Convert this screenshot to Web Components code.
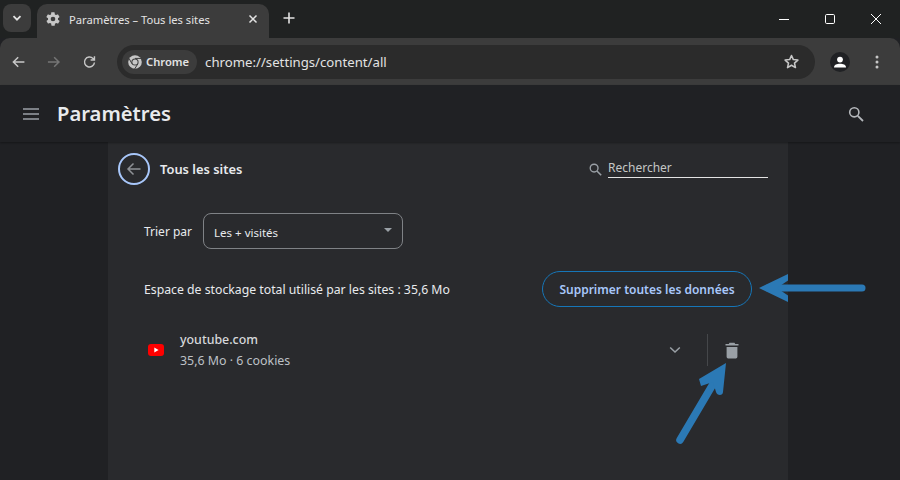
<!DOCTYPE html>
<html lang="fr">
<head>
<meta charset="utf-8">
<title>Paramètres – Tous les sites</title>
<style>
  html, body { margin: 0; height: 100%; background: #202124; overflow: hidden; }
  body { font-family: "Noto Sans", "Open Sans", sans-serif; color: #e8eaed; width: 900px; height: 480px; position: relative; }
  .arrows { position: absolute; left: 0; top: 0; width: 900px; height: 480px; pointer-events: none; }
</style>
</head>
<body>
<browser-tabs></browser-tabs>
<browser-toolbar></browser-toolbar>
<settings-header></settings-header>
<site-page>
  <sort-row></sort-row>
  <storage-row></storage-row>
  <site-entry></site-entry>
</site-page>
<svg class="arrows" viewBox="0 0 900 480">
  <defs><clipPath id="c1"><rect x="0" y="0" width="788" height="480"/></clipPath></defs>
  <path d="M862 288H768" stroke="#2b79b5" stroke-width="7" stroke-linecap="round" fill="none"/>
  <path d="M790 273L759 288L790 303L790 297L777 288L790 279Z" fill="#2b79b5" clip-path="url(#c1)"/>
  <path d="M680 440L719 374" stroke="#2b79b5" stroke-width="7.5" stroke-linecap="round" fill="none"/>
  <path d="M726 363L699 379L701 386L713 382L716 392C717 396 723 396 723 392Z" fill="#2b79b5"/>
</svg>
<script>
class BrowserTabs extends HTMLElement {
  constructor() {
    super();
    this.attachShadow({ mode: "open" });
    this.shadowRoot.innerHTML = `
      <style>
        :host { display: flex; height: 38px; background: #202222; box-sizing: border-box; padding: 4px 0 0 3px; font-family: "Noto Sans", sans-serif; align-items: flex-start; }
        .menu { width: 28px; height: 28px; background: #3c3c3c; border-radius: 8px; display: flex; align-items: center; justify-content: center; margin-right: 6px; }
        .tab { width: 232px; height: 34px; background: #3c3c3c; border-radius: 10px 10px 0 0; display: flex; align-items: center; box-sizing: border-box; padding: 0 8px 4px 8px; font-size: 11.2px; color: #e3e3e3; position: relative; }
        .tab span { margin-left: 8px; flex: 1; white-space: nowrap; }
        .plus { margin: 6px 0 0 12px; width: 16px; height: 16px; }
        .spacer { flex: 1; }
        .win { display: flex; width: 139px; margin-top: 1px; }
        .win div { width: 46px; height: 28px; display: flex; align-items: center; justify-content: center; }
      </style>
      <div class="menu"><svg width="12" height="12" viewBox="0 0 12 12"><path d="M2.5 4.2L6 7.7L9.5 4.2" fill="none" stroke="#e3e3e3" stroke-width="1.8"/></svg></div>
      <div class="tab">
        <svg width="16" height="16" viewBox="0 0 24 24"><path fill="#c7c7c7" d="M19.4 13c.1-.3.1-.7.1-1s0-.7-.1-1l2.1-1.6c.2-.2.2-.4.1-.6l-2-3.5c-.1-.2-.4-.3-.6-.2l-2.5 1c-.5-.4-1.1-.7-1.7-1l-.4-2.6c0-.3-.2-.5-.5-.5h-4c-.3 0-.5.2-.5.4l-.4 2.7c-.6.2-1.1.6-1.7 1l-2.5-1c-.2-.1-.5 0-.6.2l-2 3.5c-.1.2 0 .4.1.6L4.6 11c0 .3-.1.7-.1 1s0 .7.1 1l-2.1 1.6c-.2.2-.2.4-.1.6l2 3.5c.1.2.4.3.6.2l2.5-1c.5.4 1.1.7 1.7 1l.4 2.6c0 .3.2.5.5.5h4c.3 0 .5-.2.5-.4l.4-2.7c.6-.2 1.1-.6 1.7-1l2.5 1c.2.1.5 0 .6-.2l2-3.5c.1-.2 0-.4-.1-.6L19.4 13zM12 15.5a3.5 3.5 0 1 1 0-7 3.5 3.5 0 0 1 0 7z"/></svg>
        <span>Paramètres – Tous les sites</span>
        <svg width="10" height="10" viewBox="0 0 10 10" style="margin:0 3px 0 0"><path d="M1.5 1.5L8.5 8.5M8.5 1.5L1.5 8.5" stroke="#e3e3e3" stroke-width="1.5"/></svg>
      </div>
      <svg class="plus" viewBox="0 0 16 16"><path d="M8 2.5V13.5M2.5 8H13.5" stroke="#e3e3e3" stroke-width="1.6"/></svg>
      <div class="spacer"></div>
      <div class="win">
        <div><svg width="12" height="12" viewBox="0 0 12 12"><path d="M1 6.5H11" stroke="#fff" stroke-width="1"/></svg></div>
        <div><svg width="12" height="12" viewBox="0 0 12 12"><rect x="1.5" y="1.5" width="9" height="9" rx="1.2" fill="none" stroke="#fff" stroke-width="1"/></svg></div>
        <div><svg width="12" height="12" viewBox="0 0 12 12"><path d="M1 1L11 11M11 1L1 11" stroke="#fff" stroke-width="1"/></svg></div>
      </div>`;
  }
}
customElements.define("browser-tabs", BrowserTabs);

class BrowserToolbar extends HTMLElement {
  constructor() {
    super();
    this.attachShadow({ mode: "open" });
    this.shadowRoot.innerHTML = `
      <style>
        :host { display: flex; align-items: center; height: 47px; background: #3c3c3c; border-radius: 10px 10px 0 0; box-sizing: border-box; padding: 0 6px 0 11px; font-family: "Noto Sans", sans-serif; }
        .nav { display: flex; width: 106px; }
        .nav svg { margin-right: 20px; }
        .omni { width: 698px; height: 34px; background: #2b2b2b; border-radius: 17px; display: flex; align-items: center; box-sizing: border-box; padding: 0 15px 0 5px; }
        .chip { display: flex; align-items: center; background: #3c3c3c; border-radius: 12px; height: 24px; padding: 0 8px 0 5px; font-size: 11.2px; font-weight: 600; color: #e3e3e3; gap: 3px; }
        .url { margin-left: 8px; font-size: 13.2px; color: #e3e3e3; flex: 1; white-space: nowrap; }
        .right { display: flex; align-items: center; margin-left: 15px; gap: 19px; }
      </style>
      <div class="nav">
        <svg width="16" height="16" viewBox="0 0 16 16"><path d="M14 8H2.5M7.5 3L2.5 8L7.5 13" fill="none" stroke="#c7c7c7" stroke-width="1.6"/></svg>
        <svg width="16" height="16" viewBox="0 0 16 16"><path d="M2 8H13.5M8.5 3L13.5 8L8.5 13" fill="none" stroke="#757575" stroke-width="1.6"/></svg>
        <svg width="16" height="16" viewBox="0 0 16 16"><path d="M13 8.5A5.2 5.2 0 1 1 11.5 4.3L13 5.8M13 2V6H9" fill="none" stroke="#c7c7c7" stroke-width="1.5"/></svg>
      </div>
      <div class="omni">
        <div class="chip">
          <svg width="16" height="16" viewBox="0 0 16 16"><circle cx="8" cy="8" r="6.8" fill="#c7c7c7"/><circle cx="8" cy="8" r="3.6" fill="#3c3c3c"/><circle cx="8" cy="8" r="2.6" fill="#c7c7c7"/><path d="M8 4.4H14.2M5 9.8L2 4.4M10.9 9.8L7.6 15" stroke="#3c3c3c" stroke-width="1" fill="none"/></svg>
          <span>Chrome</span>
        </div>
        <div class="url">chrome://settings/content/all</div>
        <svg width="17" height="17" viewBox="0 0 24 24"><path d="M12 3.5L14.6 9.3L21 10L16.2 14.3L17.6 20.6L12 17.3L6.4 20.6L7.8 14.3L3 10L9.4 9.3Z" fill="none" stroke="#c7c7c7" stroke-width="2.2" stroke-linejoin="round"/></svg>
      </div>
      <div class="right">
        <svg width="20" height="20" viewBox="0 0 20 20"><circle cx="10" cy="10" r="10" fill="#202124"/><circle cx="10" cy="7.6" r="2.9" fill="#fff"/><path d="M4 15.5C4 12.8 7 11.8 10 11.8S16 12.8 16 15.5Z" fill="#fff"/></svg>
        <svg width="16" height="16" viewBox="0 0 16 16"><circle cx="8" cy="3" r="1.5" fill="#c7c7c7"/><circle cx="8" cy="8" r="1.5" fill="#c7c7c7"/><circle cx="8" cy="13" r="1.5" fill="#c7c7c7"/></svg>
      </div>`;
  }
}
customElements.define("browser-toolbar", BrowserToolbar);

class SettingsHeader extends HTMLElement {
  constructor() {
    super();
    this.attachShadow({ mode: "open" });
    this.shadowRoot.innerHTML = `
      <style>
        :host { display: flex; align-items: center; height: 57px; background: #202124; box-sizing: border-box; padding: 0 36px 0 23px; font-family: "Noto Sans", sans-serif; box-shadow: 0 1px 2px rgba(0,0,0,.35); position: relative; }
        h1 { margin: 0 0 0 18px; font-size: 20.2px; font-weight: 600; color: #e8eaed; flex: 1; line-height: 57px; }
      </style>
      <svg width="16" height="12" viewBox="0 0 16 12"><path d="M0 1H16M0 6H16M0 11H16" stroke="#9aa0a6" stroke-width="1.6"/></svg>
      <h1>Paramètres</h1>
      <svg width="16" height="16" viewBox="0 0 16 16"><circle cx="6.3" cy="6.3" r="4.6" fill="none" stroke="#b4b7bb" stroke-width="1.6"/><path d="M9.8 9.8L15 15" stroke="#b4b7bb" stroke-width="1.8"/></svg>`;
  }
}
customElements.define("settings-header", SettingsHeader);

class SitePage extends HTMLElement {
  constructor() {
    super();
    this.attachShadow({ mode: "open" });
    this.shadowRoot.innerHTML = `
      <style>
        :host { display: block; width: 680px; height: 338px; margin-left: 108px; background: #292a2d; font-family: "Noto Sans", sans-serif; box-sizing: border-box; padding-top: 10px; }
        .head { display: flex; align-items: center; height: 34px; padding: 0 20px 0 10px; }
        .back { width: 32px; height: 32px; box-sizing: border-box; border: 2px solid #a8c7fa; border-radius: 50%; display: flex; align-items: center; justify-content: center; }
        .title { margin-left: 10px; font-size: 12.9px; font-weight: 600; color: #e8eaed; flex: 1; }
        .search { display: flex; align-items: center; gap: 6px; }
        .field { width: 160px; font-size: 12px; color: #c4c7c5; border-bottom: 1px solid #e3e3e3; line-height: 16px; height: 17px; }
      </style>
      <div class="head">
        <div class="back"><svg width="16" height="16" viewBox="0 0 16 16"><path d="M14.5 8H2M7.5 2.5L2 8L7.5 13.5" fill="none" stroke="#8f9296" stroke-width="1.5"/></svg></div>
        <div class="title">Tous les sites</div>
        <div class="search">
          <svg width="13" height="13" viewBox="0 0 16 16"><circle cx="6.3" cy="6.3" r="4.8" fill="none" stroke="#9aa0a6" stroke-width="1.7"/><path d="M9.8 9.8L15 15" stroke="#9aa0a6" stroke-width="1.9"/></svg>
          <div class="field">Rechercher</div>
        </div>
      </div>
      <slot></slot>`;
  }
}
customElements.define("site-page", SitePage);

class SortRow extends HTMLElement {
  constructor() {
    super();
    this.attachShadow({ mode: "open" });
    this.shadowRoot.innerHTML = `
      <style>
        :host { display: flex; align-items: center; margin-top: 27px; padding-left: 36px; font-size: 12px; color: #e8eaed; }
        .select { margin-left: 11px; width: 200px; height: 36px; box-sizing: border-box; border: 1px solid #7f8286; border-radius: 8px; display: flex; align-items: center; justify-content: space-between; padding: 0 10px; font-size: 11.5px; }
        .caret { width: 0; height: 0; border-left: 4px solid transparent; border-right: 4px solid transparent; border-top: 4px solid #9aa0a6; margin-top: -3px; }
        .select span { margin-top: 2px; }
      </style>
      <span>Trier par</span>
      <div class="select"><span>Les + visités</span><div class="caret"></div></div>`;
  }
}
customElements.define("sort-row", SortRow);

class StorageRow extends HTMLElement {
  constructor() {
    super();
    this.attachShadow({ mode: "open" });
    this.shadowRoot.innerHTML = `
      <style>
        :host { display: flex; align-items: center; justify-content: space-between; margin-top: 22px; padding: 0 36px; font-size: 12.25px; color: #e8eaed; }
        button { width: 210px; height: 36px; border-radius: 18px; border: 1px solid #1676b8; background: transparent; color: #a8c7fa; font: 600 12px "Noto Sans", sans-serif; padding: 0; }
      </style>
      <span>Espace de stockage total utilisé par les sites : 35,6 Mo</span>
      <button>Supprimer toutes les données</button>`;
  }
}
customElements.define("storage-row", StorageRow);

class SiteEntry extends HTMLElement {
  constructor() {
    super();
    this.attachShadow({ mode: "open" });
    this.shadowRoot.innerHTML = `
      <style>
        :host { display: flex; align-items: center; margin-top: 17px; padding: 0 49px 0 40px; height: 52px; font-size: 12.4px; color: #bdc1c6; }
        .icon { width: 16px; height: 12px; margin-right: 16px; margin-top: -1px; }
        .text { flex: 1; line-height: 21px; }
        .name { color: #d6d8db; font-weight: 500; }
        .sep { width: 1px; height: 32px; background: #45474a; margin: 0 17px 0 26px; }
      </style>
      <svg class="icon" viewBox="0 0 16 12"><rect width="16" height="12" rx="3" fill="#ff0000"/><path d="M6.3 3.6L10.6 6L6.3 8.4Z" fill="#fff"/></svg>
      <div class="text"><div class="name">youtube.com</div><div>35,6 Mo · 6 cookies</div></div>
      <svg width="12" height="8" viewBox="0 0 12 8"><path d="M1.2 1.5L6 6L10.8 1.5" fill="none" stroke="#9aa0a6" stroke-width="1.5"/></svg>
      <div class="sep"></div>
      <svg width="14" height="17" viewBox="0 0 14 17"><path d="M4.5 0.8H9.5L10.2 2H13.5V3.6H0.5V2H3.8Z" fill="#9aa0a6"/><path d="M1.6 5H12.4V14.8A1.6 1.6 0 0 1 10.8 16.4H3.2A1.6 1.6 0 0 1 1.6 14.8Z" fill="#9aa0a6"/></svg>`;
  }
}
customElements.define("site-entry", SiteEntry);
</script>
</body>
</html>
